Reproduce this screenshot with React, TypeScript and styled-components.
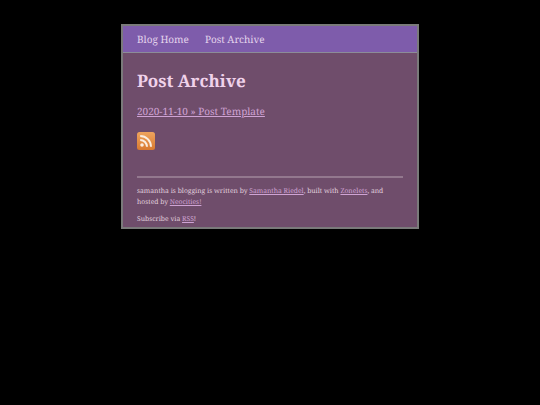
import React from "react";
import styled, { createGlobalStyle } from "styled-components";

const Global = createGlobalStyle`
  html, body { margin: 0; padding: 0; background: #000; }
  body { font-family: "Noto Serif", "DejaVu Serif", serif; text-rendering: geometricPrecision; }
`;
const Page = styled.div`
  width: 298px;
  margin: 24px 0 0 121px;
  box-sizing: border-box;
  border: 2px solid #7a7a7a;
  background: #6f4d6b;
`;
const Nav = styled.nav`
  display: flex;
  gap: 16px;
  height: 26px;
  padding: 0 14px;
  align-items: center;
  background: #7e5cab;
  border-bottom: 1px solid #8c8c98;
  box-sizing: content-box;
`;
const NavLink = styled.a`
  color: #e3d3ec;
  font-size: 10px;
  text-decoration: none;
`;
const Main = styled.main`
  padding: 16px 14px 3px;
`;
const Title = styled.h1`
  margin: 0;
  color: #f0d2ea;
  font-size: 17px;
  line-height: 24px;
  font-weight: 700;
`;
const PostLine = styled.p`
  margin: 10px 0 0;
  font-size: 10px;
  line-height: 16px;
`;
const PostLink = styled.a`
  color: #cfa3d4;
  text-decoration: underline;
`;
const Feed = styled.div`
  margin-top: 13px;
  height: 18px;
`;
const Rule = styled.hr`
  margin: 26px 0 0;
  border: 0;
  height: 2px;
  background: #93788e;
`;
const Foot = styled.p<{ $top: number }>`
  margin: ${(p) => p.$top}px 0 0;
  color: #e0d0de;
  font-size: 6.78px;
  line-height: 11px;
`;
const FootLink = styled.a`
  color: #cfa3d4;
  text-decoration: underline;
`;
const RssSvg = styled.svg`
  display: block;
`;

const RssIcon = () => (
  <RssSvg width="18" height="18" viewBox="0 0 18 18">
    <defs>
      <linearGradient id="rss" x1="0" y1="0" x2="0" y2="1">
        <stop offset="0" stopColor="#eea45e" />
        <stop offset="1" stopColor="#d97a30" />
      </linearGradient>
    </defs>
    <rect x="0" y="0" width="18" height="18" rx="2.5" fill="url(#rss)" />
    <circle cx="5" cy="13" r="1.8" fill="#fbeee0" />
    <path d="M3.2 8a6.8 6.8 0 0 1 6.8 6.8" fill="none" stroke="#fbeee0" strokeWidth="2" />
    <path d="M3.2 4a10.8 10.8 0 0 1 10.8 10.8" fill="none" stroke="#fbeee0" strokeWidth="2" />
  </RssSvg>
);

export default function App() {
  return (
    <>
      <Global />
      <Page>
        <Nav>
          <NavLink href="#">Blog Home</NavLink>
          <NavLink href="#">Post Archive</NavLink>
        </Nav>
        <Main>
          <Title>Post Archive</Title>
          <PostLine>
            <PostLink href="#">2020-11-10 » Post Template</PostLink>
          </PostLine>
          <Feed>
            <RssIcon />
          </Feed>
          <Rule />
          <Foot $top={7}>
            samantha is blogging is written by <FootLink href="#">Samantha Riedel</FootLink>, built with{" "}
            <FootLink href="#">Zonelets</FootLink>, and hosted by <FootLink href="#">Neocities!</FootLink>
          </Foot>
          <Foot $top={6}>
            Subscribe via <FootLink href="#">RSS</FootLink>!
          </Foot>
        </Main>
      </Page>
    </>
  );
}
